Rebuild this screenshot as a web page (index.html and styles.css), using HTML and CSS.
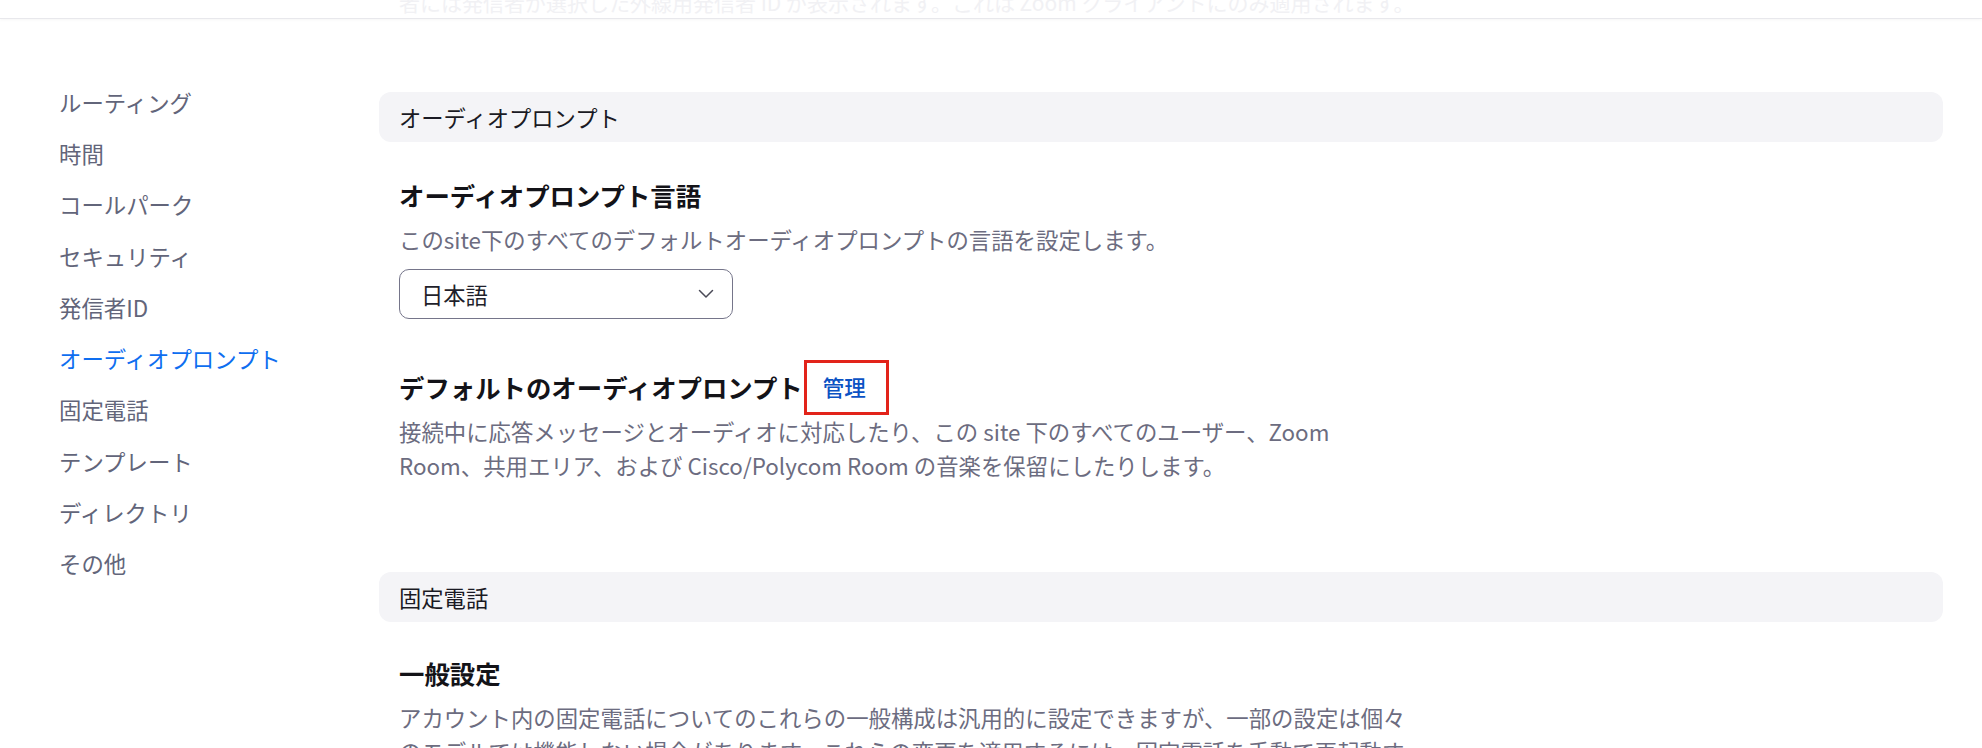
FILE: index.html
```html
<!DOCTYPE html>
<html lang="ja">
<head>
<meta charset="utf-8">
<title>オーディオプロンプト</title>
<link rel="stylesheet" href="styles.css">
</head>
<body>
<header class="topbar">
  <p class="topbar-text">者には発信者が選択した外線用発信者 ID が表示されます。これは Zoom クライアントにのみ適用されます。</p>
</header>
<div class="layout">
  <nav class="sidebar">
    <a class="nav-item">ルーティング</a>
    <a class="nav-item">時間</a>
    <a class="nav-item">コールパーク</a>
    <a class="nav-item">セキュリティ</a>
    <a class="nav-item">発信者ID</a>
    <a class="nav-item active">オーディオプロンプト</a>
    <a class="nav-item">固定電話</a>
    <a class="nav-item">テンプレート</a>
    <a class="nav-item">ディレクトリ</a>
    <a class="nav-item">その他</a>
  </nav>
  <main class="main">
    <section class="section">
      <div class="section-bar">オーディオプロンプト</div>
      <div class="setting first">
        <h3 class="setting-title">オーディオプロンプト言語</h3>
        <p class="setting-desc">このsite下のすべてのデフォルトオーディオプロンプトの言語を設定します。</p>
        <div class="select">
          <span>日本語</span>
          <svg class="chevron" width="16" height="10" viewBox="0 0 16 10"><path d="M1.5 1.5 L8 8 L14.5 1.5" fill="none" stroke="#4a4a57" stroke-width="1.5" stroke-linecap="round" stroke-linejoin="round"/></svg>
        </div>
      </div>
      <div class="setting second">
        <h3 class="setting-title row">デフォルトのオーディオプロンプト<a class="manage">管理</a></h3>
        <p class="setting-desc">接続中に応答メッセージとオーディオに対応したり、この site 下のすべてのユーザー、Zoom<br>Room、共用エリア、および Cisco/Polycom Room の音楽を保留にしたりします。</p>
      </div>
    </section>
    <section class="section next">
      <div class="section-bar">固定電話</div>
      <div class="setting first alt">
        <h3 class="setting-title">一般設定</h3>
        <p class="setting-desc">アカウント内の固定電話についてのこれらの一般構成は汎用的に設定できますが、一部の設定は個々<br>のモデルでは機能しない場合があります。これらの変更を適用するには、固定電話を手動で再起動す<br>る必要があります。</p>
      </div>
    </section>
  </main>
</div>
</body>
</html>
```

FILE: styles.css
```css
* { box-sizing: border-box; }
html, body { margin: 0; padding: 0; }
body {
  width: 1982px;
  height: 748px;
  overflow: hidden;
  background: #ffffff;
  font-family: "Noto Sans CJK JP", "Noto Sans", sans-serif;
  color: #222230;
}
.topbar {
  height: 19px;
  overflow: hidden;
  background: #ffffff;
  border-bottom: 1px solid #e8e8ec;
  box-shadow: 0 1px 3px rgba(0, 0, 0, 0.04);
  padding-left: 399px;
  position: relative;
  z-index: 2;
}
.topbar-text {
  margin: -15px 0 0 0;
  font-size: 21px;
  line-height: 34px;
  color: #f1f1f4;
  white-space: nowrap;
}
.layout {
  display: flex;
}
.sidebar {
  width: 379px;
  flex: none;
  padding: 57px 0 0 59px;
  display: flex;
  flex-direction: column;
}
.nav-item {
  height: 51.3px;
  display: flex;
  align-items: center;
  font-size: 22.4px;
  color: #62657a;
  white-space: nowrap;
}
.nav-item.active { color: #0e6ef0; }
.main {
  flex: 1;
  padding: 73px 39px 0 0;
}
.section-bar {
  height: 50px;
  border-radius: 12px;
  background: #f4f4f7;
  display: flex;
  align-items: center;
  padding-left: 20px;
  font-size: 22.3px;
  color: #1a1a24;
}
.section.next { margin-top: 90px; }
.setting { padding-left: 20px; }
.setting.first { margin-top: 36px; }
.setting.first.alt { margin-top: 34px; }
.setting.second { margin-top: 51px; }
.setting-title {
  margin: 0;
  font-size: 25.4px;
  line-height: 34px;
  font-weight: 700;
  color: #131318;
  white-space: nowrap;
}
.setting-title.row {
  display: flex;
  align-items: center;
}
.setting-desc {
  margin: 10px 0 0 0;
  font-size: 22.4px;
  line-height: 34px;
  color: #6c6c80;
  white-space: nowrap;
}
.select {
  margin-top: 13px;
  width: 334px;
  height: 50px;
  border: 1px solid #75758a;
  border-radius: 10px;
  display: flex;
  align-items: center;
  justify-content: space-between;
  padding: 0 18px 0 21px;
  font-size: 22.3px;
  color: #1f1f2b;
}
.chevron { display: block; }
.manage {
  margin: -10.5px 0 -10.5px 1px;
  height: 55px;
  border: 3px solid #e2231a;
  padding: 0 20px 0 16px;
  display: flex;
  align-items: center;
  font-size: 21.5px;
  font-weight: 500;
  color: #0b52c4;
}
```
